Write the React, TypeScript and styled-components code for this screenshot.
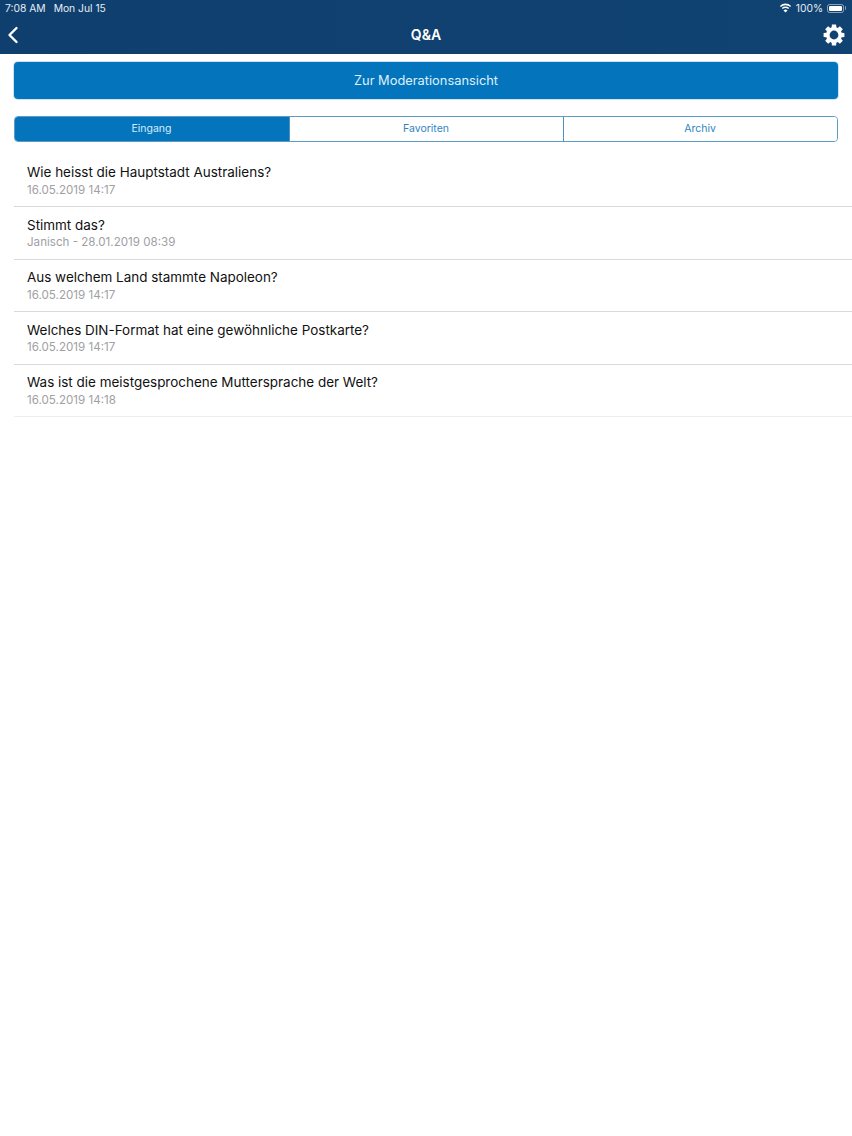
import styled, { createGlobalStyle } from 'styled-components'

const questions = [
  { title: 'Wie heisst die Hauptstadt Australiens?', meta: '16.05.2019 14:17' },
  { title: 'Stimmt das?', meta: 'Janisch - 28.01.2019 08:39' },
  { title: 'Aus welchem Land stammte Napoleon?', meta: '16.05.2019 14:17' },
  { title: 'Welches DIN-Format hat eine gewöhnliche Postkarte?', meta: '16.05.2019 14:17' },
  { title: 'Was ist die meistgesprochene Muttersprache der Welt?', meta: '16.05.2019 14:18' },
]

const tabs = ['Eingang', 'Favoriten', 'Archiv']

// eight chunky teeth around a round hole
const gearPath = () => {
  const point = (radius: number, angle: number) =>
    `${(11 + radius * Math.cos(angle)).toFixed(2)} ${(11 + radius * Math.sin(angle)).toFixed(2)}`
  let d = ''
  for (let i = 0; i < 8; i++) {
    const mid = (i * Math.PI) / 4 - Math.PI / 2
    const parts = [
      point(8, mid - 0.3),
      point(10.6, mid - 0.2),
      point(10.6, mid + 0.2),
      point(8, mid + 0.3),
    ]
    d += `${i === 0 ? 'M' : 'L'}${parts.join('L')}`
  }
  return `${d}ZM11 6.6a4.4 4.4 0 1 0 0 8.8a4.4 4.4 0 0 0 0-8.8Z`
}

const App = () => {
  return (
    <>
      <GlobalStyle />
      <StyledPage>
        <StyledHeader>
          <StyledStatusBar>
            <StyledClock>
              <span>7:08 AM</span>
              <span>Mon Jul 15</span>
            </StyledClock>
            <StyledStatusRight>
              <svg width='13' height='10' viewBox='0 0 13 10' fill='#fff'>
                <path d='M6.5 2.2c1.8 0 3.4.7 4.6 1.8l1-1.1A8.2 8.2 0 0 0 6.5.6 8.2 8.2 0 0 0 .9 2.9l1 1.1a6.7 6.7 0 0 1 4.6-1.8z' />
                <path d='M6.5 4.9c1 0 2 .4 2.7 1.1l1-1.1a5.4 5.4 0 0 0-7.4 0l1 1.1c.7-.7 1.7-1.1 2.7-1.1z' />
                <path d='M6.5 9.6l2-2.2a2.9 2.9 0 0 0-4 0z' />
              </svg>
              <span>100%</span>
              <StyledBattery>
                <StyledBatteryFill />
              </StyledBattery>
            </StyledStatusRight>
          </StyledStatusBar>
          <StyledNavBar>
            <svg width='12' height='18' viewBox='0 0 12 18' fill='none'>
              <path d='M9.5 2 2.5 9l7 7' stroke='#fff' strokeWidth='2.4' strokeLinecap='round' strokeLinejoin='round' />
            </svg>
            <StyledNavTitle>Q&amp;A</StyledNavTitle>
            <StyledNavAction>
              <svg width='22' height='22' viewBox='0 0 22 22'>
                <path fill='#fff' fillRule='evenodd' d={gearPath()} />
              </svg>
            </StyledNavAction>
          </StyledNavBar>
        </StyledHeader>

        <StyledContent>
          <StyledModerationButton>Zur Moderationsansicht</StyledModerationButton>
          <StyledTabs>
            {tabs.map((tab, index) => (
              <StyledTab key={tab} $active={index === 0}>
                {tab}
              </StyledTab>
            ))}
          </StyledTabs>
        </StyledContent>

        <StyledList>
          {questions.map(question => (
            <StyledRow key={question.title}>
              <StyledRowTitle>{question.title}</StyledRowTitle>
              <StyledRowMeta>{question.meta}</StyledRowMeta>
            </StyledRow>
          ))}
        </StyledList>
      </StyledPage>
    </>
  )
}

export default App

const GlobalStyle = createGlobalStyle`
  html, body {
    margin: 0;
    padding: 0;
    background: #ffffff;
  }
  * {
    box-sizing: border-box;
  }
`

const StyledPage = styled.div`
  width: 852px;
  height: 1136px;
  overflow: hidden;
  background: #ffffff;
  font-family: Inter, 'Liberation Sans', sans-serif;
`

const StyledHeader = styled.header`
  height: 54px;
  background: linear-gradient(90deg, #0f3f6e 0%, #104272 100%);
  color: #ffffff;
  display: flex;
  flex-direction: column;
`

const StyledStatusBar = styled.div`
  height: 16px;
  padding: 0 6px 0 5px;
  display: flex;
  justify-content: space-between;
  align-items: center;
  font-size: 10.3px;
  color: #e6edf4;
`

const StyledClock = styled.div`
  display: flex;
  gap: 8px;
`

const StyledStatusRight = styled.div`
  display: flex;
  align-items: center;
  gap: 4px;
`

const StyledBattery = styled.div`
  position: relative;
  width: 17px;
  height: 9px;
  margin-right: 2px;
  padding: 1px;
  border: 1px solid rgba(255, 255, 255, 0.5);
  border-radius: 2.5px;
  &::after {
    content: '';
    position: absolute;
    top: 1.5px;
    right: -3px;
    width: 1.5px;
    height: 4px;
    background: rgba(255, 255, 255, 0.5);
    border-radius: 0 1px 1px 0;
  }
`

const StyledBatteryFill = styled.div`
  width: 100%;
  height: 100%;
  background: #ffffff;
  border-radius: 1px;
`

const StyledNavBar = styled.div`
  flex: 1;
  padding: 0 7px 1px 7px;
  display: grid;
  grid-template-columns: 1fr auto 1fr;
  align-items: center;
`

const StyledNavTitle = styled.div`
  font-size: 14px;
  font-weight: 600;
`

const StyledNavAction = styled.div`
  display: flex;
  justify-content: flex-end;
`

const StyledContent = styled.div`
  padding: 8px 14px 0 14px;
  display: flex;
  flex-direction: column;
  gap: 17px;
`

const StyledModerationButton = styled.div`
  height: 37px;
  display: flex;
  justify-content: center;
  align-items: center;
  background: #0475bd;
  border-radius: 4px;
  box-shadow: 0 0 0 1px rgba(4, 117, 189, 0.2);
  color: #dff1fb;
  font-size: 12.85px;
`

const StyledTabs = styled.div`
  height: 26px;
  display: grid;
  grid-template-columns: repeat(3, 1fr);
  border: 1.5px solid #5c9bc4;
  border-radius: 4px;
  overflow: hidden;
`

const StyledTab = styled.div<{ $active?: boolean }>`
  padding: 0 1px 1px 0;
  display: flex;
  justify-content: center;
  align-items: center;
  font-size: 10.5px;
  background: ${({ $active }) => ($active ? '#0475bd' : '#ffffff')};
  color: ${({ $active }) => ($active ? '#d5ecf9' : '#2f86bf')};
  & + & {
    border-left: 1px solid #4e92bd;
  }
`

const StyledList = styled.div`
  margin-top: 12.5px;
  display: flex;
  flex-direction: column;
`

const StyledRow = styled.div`
  height: 52.5px;
  margin-left: 14px;
  padding: 9.5px 0 0 13px;
  border-bottom: 1px solid #d9d9dc;
  &:last-child {
    border-bottom-color: #eeeeef;
  }
`

const StyledRowTitle = styled.div`
  font-size: 13.46px;
  line-height: 17px;
  color: #111111;
`

const StyledRowMeta = styled.div`
  margin-top: 1.5px;
  font-size: 11.6px;
  line-height: 14px;
  color: #a0a0a4;
`
